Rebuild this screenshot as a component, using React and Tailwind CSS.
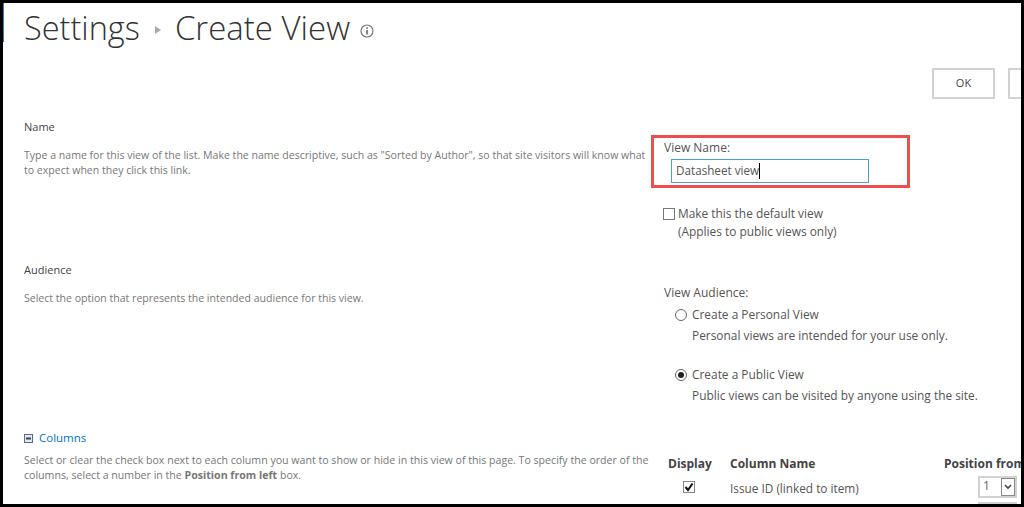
const font = { fontFamily: '"Open Sans", "Noto Sans", sans-serif' };

function Section({ title, children, className }) {
  return (
    <div className={className}>
      <div className="text-[11px] leading-[14px] text-[#444444]">{title}</div>
      <div className="mt-[14px] text-[10.55px] leading-[15px] text-[#777777]">{children}</div>
    </div>
  );
}

function Radio({ checked, title, sub, className }) {
  return (
    <div className={`flex ${className}`}>
      <div className="mt-[4px] flex h-[12px] w-[12px] shrink-0 items-center justify-center rounded-full border border-[#666666] bg-white">
        {checked && <div className="h-[6px] w-[6px] rounded-full bg-[#222222]" />}
      </div>
      <div className="ml-[5px] text-[#555555]">
        <div className="h-[21px] text-[11.9px] leading-[18px]">{title}</div>
        <div className="text-[11.9px] leading-[18px]">{sub}</div>
      </div>
    </div>
  );
}

function Select({ value, className }) {
  return (
    <div className={`flex w-[39px] border-2 border-[#d2d2d2] ${className}`}>
      <span className="w-[21px] pl-[3px] text-[#666666]">{value}</span>
      <div className="flex w-[14px] items-center justify-center border border-[#888888]">
        <svg width="8" height="6" viewBox="0 0 8 6"><path d="M1 1L4 4L7 1" fill="none" stroke="#444444" strokeWidth="1.6" /></svg>
      </div>
    </div>
  );
}

export default function App() {
  return (
    <div style={font} className="relative h-[507px] w-[1024px] overflow-hidden border-[3px] border-black bg-white">
      <div className="absolute left-0 top-0 h-[39px] w-px bg-[#2b7fb8]" />
      <header className="flex h-[50px] items-center pl-[21px]">
        <span className="text-[32.5px] font-light leading-[50px] text-[#333333]">Settings</span>
        <svg width="6" height="8" viewBox="0 0 6 8" className="ml-[15px] mr-[14px] mt-[3px]"><path d="M0 0L6 4L0 8Z" fill="#aaaaaa" /></svg>
        <span className="text-[33px] font-light leading-[50px] text-[#333333]">Create View</span>
        <svg width="14" height="14" viewBox="0 0 14 14" className="ml-[10px] mt-[5px]">
          <circle cx="7" cy="7" r="6" fill="none" stroke="#777777" strokeWidth="1.2" />
          <rect x="6.2" y="6" width="1.6" height="4.5" fill="#666666" />
          <rect x="6.2" y="3.4" width="1.6" height="1.6" fill="#666666" />
        </svg>
      </header>

      <div className="mt-[15px] flex h-[31px] justify-end">
        <button className="h-[31px] w-[63px] border-2 border-[#d2d2d2] text-[11px] text-[#444444]">OK</button>
        <div className="ml-[13px] h-[31px] w-[13px] border-2 border-r-0 border-[#d2d2d2]" />
      </div>

      <main className="grid grid-cols-[640px_1fr] pl-[21px]">
        <div>
          <Section title="Name" className="mt-[21px] h-[143px]">
            <p className="w-[625px]">Type a name for this view of the list. Make the name descriptive, such as "Sorted by Author", so that site visitors will know what to expect when they click this link.</p>
          </Section>
          <Section title="Audience" className="h-[168px]">
            <p>Select the option that represents the intended audience for this view.</p>
          </Section>
          <div>
            <div className="flex items-center">
              <svg width="9" height="9" viewBox="0 0 9 9">
                <rect x="0.5" y="0.5" width="8" height="8" fill="#e6e9f0" stroke="#5a6a8a" />
                <rect x="2" y="3.5" width="5" height="2" fill="#33415f" />
              </svg>
              <span className="ml-[6px] text-[11.5px] leading-[14px] text-[#0072c6]">Columns</span>
            </div>
            <p className="mt-[8px] w-[630px] text-[10.6px] leading-[15px] text-[#777777]">
              Select or clear the check box next to each column you want to show or hide in this view of this page. To specify the order of the columns, select a number in the <b className="font-bold">Position from left</b> box.
            </p>
          </div>
        </div>

        <div className="min-w-0">
          <div className="ml-[-13px] mt-[36px] h-[53px] w-[259px] border-[3px] border-[#f04e4e] pl-[10px]">
            <div className="mt-[3px] text-[12px] leading-[14px] text-[#555555]">View Name:</div>
            <div className="ml-[7px] mt-[4px] flex h-[24px] w-[198px] items-center border border-[#4b9fd8] pl-[4px] text-[11.7px] text-[#555555]">
              Datasheet view<span className="h-[16px] w-px bg-black" />
            </div>
          </div>
          <div className="ml-[-1px] mt-[16px] flex">
            <div className="mt-[4px] h-[12px] w-[12px] shrink-0 border border-[#777777]" />
            <div className="ml-[3px] text-[11.9px] leading-[18px] text-[#555555]">
              <div>Make this the default view</div>
              <div>(Applies to public views only)</div>
            </div>
          </div>
          <div className="mt-[45px] text-[12px] leading-[16px] text-[#555555]">View Audience:</div>
          <Radio className="ml-[11px] mt-[4px] h-[60px]" title="Create a Personal View" sub="Personal views are intended for your use only." />
          <Radio checked className="ml-[11px] h-[60px]" title="Create a Public View" sub="Public views can be visited by anyone using the site." />
          <div className="ml-[4px] mt-[31px] grid grid-cols-[62px_214px_1fr] text-[12px] leading-[16px]">
            <b className="font-bold text-[#444444]">Display</b>
            <b className="font-bold text-[#444444]">Column Name</b>
            <b className="whitespace-nowrap font-bold text-[#444444]">Position from left</b>
            <div className="mt-[9px] pl-[15px]">
              <div className="flex h-[12px] w-[12px] items-center justify-center border border-[#888888]">
                <svg width="10" height="10" viewBox="0 0 10 10"><path d="M1.5 5L4 8L8.5 1.5" fill="none" stroke="#111111" strokeWidth="2" /></svg>
              </div>
            </div>
            <div className="mt-[8px] text-[11.8px] text-[#555555]">Issue ID (linked to item)</div>
            <Select value="1" className="ml-[34px] mt-[4px] h-[22px]" />
            <Select value="" className="col-start-3 ml-[34px] mt-[4px] h-[22px]" />
          </div>
        </div>
      </main>
    </div>
  );
}
